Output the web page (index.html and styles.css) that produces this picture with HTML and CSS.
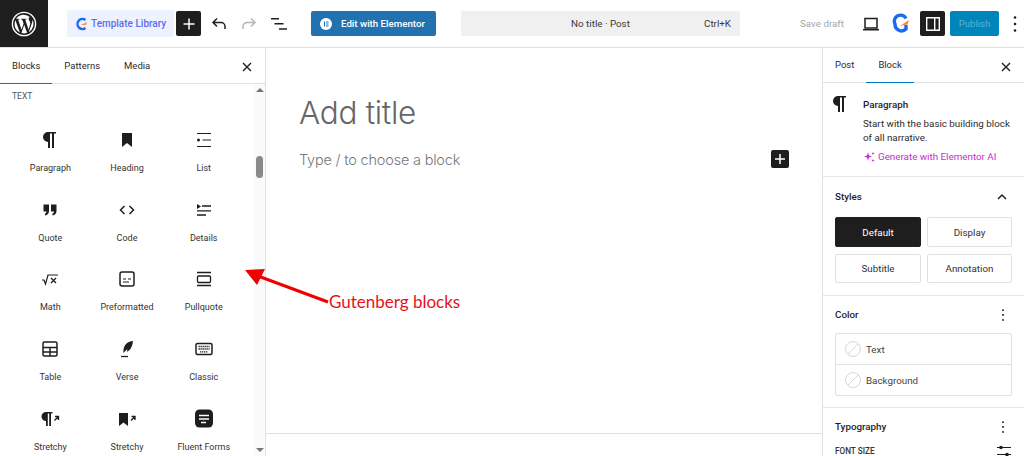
FILE: index.html
```html
<!DOCTYPE html>
<html lang="en">
<head>
    <meta charset="UTF-8">
    <title>Add New Post</title>
    <link rel="stylesheet" href="styles.css">
</head>
<body>
    <svg class="defs" width="0" height="0">
        <symbol id="i-para" viewBox="0 0 24 24"><path d="M18 4H10a5 5 0 0 0 0 10v6h2V5.600h2V20h2V5.600h2z"/></symbol>
        <symbol id="i-close" viewBox="0 0 24 24"><path d="M6 6l12 12M18 6L6 18" fill="none" stroke="currentColor" stroke-width="2"/></symbol>
        <symbol id="i-dots" viewBox="0 0 24 24"><circle cx="12" cy="5.500" r="1.300"/><circle cx="12" cy="12" r="1.300"/><circle cx="12" cy="18.500" r="1.300"/></symbol>
    </svg>

    <header class="topbar">
        <a class="wp-logo">
            <svg width="26" height="26" viewBox="0 0 26 26">
                <circle cx="13" cy="13" r="11.600" fill="none" stroke="#fff" stroke-width="1.400"/>
                <path fill="#fff" d="M3.600 13a9.400 9.400 0 0 0 5.300 8.500L4.400 9.200A9.400 9.400 0 0 0 3.600 13zm15.700-.5c0-1.200-.4-2-.8-2.600-.5-.8-.9-1.400-.9-2.100 0-.8.6-1.500 1.400-1.500h.1A9.400 9.400 0 0 0 5 7.800h.6c1 0 2.500-.1 2.500-.1.500 0 .6.700.1.800 0 0-.5.100-1.100.1l3.400 10.200 2.100-6.200-1.500-4c-.5 0-1-.1-1-.1-.5 0-.4-.8.100-.8 0 0 1.600.1 2.500.1 1 0 2.500-.1 2.500-.1.500 0 .6.700.1.800 0 0-.5.100-1.100.1l3.400 10.100.9-3.100c.4-1.200.7-2.100.7-2.900zm-6.100 1.300l-2.800 8.200a9.400 9.400 0 0 0 5.800-.2l-.1-.1zm8.100-5.300l.1 1c0 1-.2 2-.7 3.300l-2.900 8.300A9.400 9.400 0 0 0 21.300 8.500z"/>
            </svg>
        </a>
        <div class="bar-left">
            <button class="tpl-btn">
                <svg width="13" height="14" viewBox="0 0 13 14"><path d="M10.500 3A5 5 0 1 0 10.500 11" fill="none" stroke="#1a6bf0" stroke-width="2.400"/><path d="M6 8l6-3-1 3z" fill="#f58a3c"/></svg>
                Template Library
            </button>
            <button class="sq-btn">
                <svg width="14" height="14" viewBox="0 0 14 14"><path d="M7 1.500v11M1.500 7h11" stroke="#fff" stroke-width="1.500"/></svg>
            </button>
            <svg class="tool" width="24" height="24" viewBox="0 0 24 24"><path d="M18 17v-2.500a4 4 0 0 0-4-4H6.500M10 6.500l-4 4 4 4" fill="none" stroke="#1e1e1e" stroke-width="1.500"/></svg>
            <svg class="tool" width="24" height="24" viewBox="0 0 24 24"><path d="M6 17v-2.500a4 4 0 0 1 4-4h7.500M14 6.500l4 4-4 4" fill="none" stroke="#b5b5b5" stroke-width="1.500"/></svg>
            <svg class="tool" width="24" height="24" viewBox="0 0 24 24"><path d="M4 6.700h8M7.500 11.800h9M12 17h8" fill="none" stroke="#1e1e1e" stroke-width="1.500"/></svg>
            <button class="elementor-btn">
                <span class="e-badge"><svg width="10" height="10" viewBox="0 0 10 10"><path d="M3 2.500h1v5H3zM5 2.500h2.500v1H5zM5 4.500h2.500v1H5zM5 6.500h2.500v1H5z" fill="#2271b1"/></svg></span>
                Edit with Elementor
            </button>
        </div>
        <div class="command">
            <span>No title · Post</span>
            <span class="shortcut">Ctrl+K</span>
        </div>
        <div class="bar-right">
            <span class="save">Save draft</span>
            <svg class="laptop" width="24" height="24" viewBox="0 0 24 24"><path d="M6 6.500h12v9.500H6zM4 17.800h16" fill="none" stroke="#1e1e1e" stroke-width="1.500"/></svg>
            <svg class="g-logo" width="18" height="22" viewBox="0 0 18 22"><path d="M14 5.500A6 6 0 0 0 3 11a6.500 6.500 0 0 0 11 5v-4" fill="none" stroke="#1a6bf0" stroke-width="3.400"/><path d="M8 13l9-6-1.500 4.500z" fill="#f58a3c"/></svg>
            <span class="sq-btn panel-btn">
                <svg width="18" height="18" viewBox="0 0 18 18"><path d="M2.700 2.700h12.600v12.600H2.700zM10.700 2.700v12.600" fill="none" stroke="#fff" stroke-width="1.400"/></svg>
            </span>
            <button class="publish">Publish</button>
            <svg class="dots" width="16" height="24" viewBox="4 0 16 24"><use href="#i-dots" x="0" y="0" width="24" height="24"/></svg>
        </div>
    </header>

    <main class="editor">
        <aside class="inserter">
            <nav class="tabs">
                <span class="tab active">Blocks</span>
                <span class="tab">Patterns</span>
                <span class="tab">Media</span>
                <svg class="close" width="16" height="16" viewBox="0 0 24 24"><use href="#i-close"/></svg>
            </nav>
            <div class="scroll-wrap">
                <div class="block-list">
                    <h4>TEXT</h4>
                    <div class="block-grid">
                        <div class="block"><svg width="24" height="24" viewBox="0 0 24 24"><use href="#i-para"/></svg><span>Paragraph</span></div>
                        <div class="block"><svg width="24" height="24" viewBox="0 0 24 24"><path d="M7 5h10v14l-5-4-5 4z"/></svg><span>Heading</span></div>
                        <div class="block"><svg width="24" height="24" viewBox="0 0 24 24"><path d="M5 5.500h14M10.500 12H19M5 18.500h14" fill="none" stroke="#1e1e1e" stroke-width="1.200"/><circle cx="6.500" cy="12" r="1.500"/></svg><span>List</span></div>
                        <div class="block"><svg width="24" height="24" viewBox="0 0 24 24"><path d="M5.500 6.500h5.500v6.500c0 2.500-1.500 4-4 4.500v-2c1-.3 1.500-1 1.500-2H5.500zM13 6.500h5.500v6.500c0 2.500-1.500 4-4 4.500v-2c1-.3 1.500-1 1.500-2H13z"/></svg><span>Quote</span></div>
                        <div class="block"><svg width="24" height="24" viewBox="0 0 24 24"><path d="M9.500 8l-4 4 4 4M14.500 8l4 4-4 4" fill="none" stroke="#1e1e1e" stroke-width="1.500"/></svg><span>Code</span></div>
                        <div class="block"><svg width="24" height="24" viewBox="0 0 24 24"><path d="M5 6l4 2.500L5 11z"/><path d="M10 8h9M5 12.800h14M5 17h9" fill="none" stroke="#1e1e1e" stroke-width="1.300"/></svg><span>Details</span></div>
                        <div class="block"><svg width="24" height="24" viewBox="0 0 24 24"><path d="M4 13l2 0 1.500 4 2.500-9h10" fill="none" stroke="#1e1e1e" stroke-width="1.200"/><path d="M13 11l5 5M18 11l-5 5" stroke="#1e1e1e" stroke-width="1.300"/></svg><span>Math</span></div>
                        <div class="block"><svg width="24" height="24" viewBox="0 0 24 24"><rect x="5" y="5" width="14" height="14" rx="2" fill="none" stroke="#1e1e1e" stroke-width="1.500"/><path d="M8 12h3M13 12h3M8 15h6" stroke="#1e1e1e" stroke-width="1.200"/></svg><span>Preformatted</span></div>
                        <div class="block"><svg width="24" height="24" viewBox="0 0 24 24"><path d="M5 5.500h14M5 18.500h14" stroke="#1e1e1e" stroke-width="1.300"/><rect x="5.500" y="9" width="13" height="6.500" rx="1" fill="none" stroke="#1e1e1e" stroke-width="1.300"/></svg><span>Pullquote</span></div>
                        <div class="block"><svg width="24" height="24" viewBox="0 0 24 24"><rect x="5" y="5" width="14" height="14" rx="1.500" fill="none" stroke="#1e1e1e" stroke-width="1.500"/><path d="M5 10.500h14M5 15h14M12 10.500V19" stroke="#1e1e1e" stroke-width="1.500"/></svg><span>Table</span></div>
                        <div class="block"><svg width="24" height="24" viewBox="0 0 24 24"><path d="M18 4c-5 .5-9 3-9.500 9-.1 1-.1 2-.1 3l4-4-.5 2.800c3-1 5.500-5 6.100-10.800z"/><path d="M6 19.500h7" stroke="#1e1e1e" stroke-width="1.300"/></svg><span>Verse</span></div>
                        <div class="block"><svg width="24" height="24" viewBox="0 0 24 24"><rect x="4" y="6.500" width="16" height="11" rx="1.500" fill="none" stroke="#1e1e1e" stroke-width="1.500"/><path d="M6.500 9.500h11M6.500 12h11M8 14.800h8" stroke="#1e1e1e" stroke-width="1.300" stroke-dasharray="1.300 .7"/></svg><span>Classic</span></div>
                        <div class="block"><svg width="24" height="24" viewBox="0 0 24 24"><path d="M14.500 5H8a4.500 4.500 0 0 0 0 9v5h1.800V6.600h1.400V19H13V6.600h1.500z"/><path d="M16.500 13.500l4-4M17 9.500h3.500V13" fill="none" stroke="#1e1e1e" stroke-width="1.300"/></svg><span>Stretchy Paragraph</span></div>
                        <div class="block"><svg width="24" height="24" viewBox="0 0 24 24"><path d="M4 6h9v13l-4.500-3.500L4 19z"/><path d="M16 13.500l4-4M16.500 9.500H20V13" fill="none" stroke="#1e1e1e" stroke-width="1.300"/></svg><span>Stretchy Heading</span></div>
                        <div class="block"><svg width="24" height="24" viewBox="0 0 24 24"><rect x="3" y="2.500" width="18" height="18" rx="4.500" fill="#1e1e1e"/><path d="M7 8.500h10M7 12h10M9 15.500h5" stroke="#fff" stroke-width="1.600"/></svg><span>Fluent Forms</span></div>
                    </div>
                </div>
                <div class="scrollbar">
                    <span class="arr up"></span>
                    <span class="thumb"></span>
                    <span class="arr down"></span>
                </div>
            </div>
        </aside>

        <section class="canvas">
            <div class="canvas-body">
                <h1>Add title</h1>
                <div class="para-row">
                    <span class="placeholder">Type / to choose a block</span>
                    <span class="sq-btn add-small">
                        <svg width="12" height="12" viewBox="0 0 12 12"><path d="M6 1v10M1 6h10" stroke="#fff" stroke-width="1.500"/></svg>
                    </span>
                </div>
            </div>
            <div class="canvas-foot"></div>
        </section>

        <aside class="sidebar">
            <nav class="tabs side-tabs">
                <span class="tab">Post</span>
                <span class="tab active">Block</span>
                <svg class="close" width="16" height="16" viewBox="0 0 24 24"><use href="#i-close"/></svg>
            </nav>
            <div class="panel card">
                <svg class="card-icon" width="24" height="24" viewBox="0 0 24 24"><use href="#i-para"/></svg>
                <div class="card-text">
                    <h3>Paragraph</h3>
                    <p>Start with the basic building block of all narrative.</p>
                    <a class="ai-link">
                        <svg width="12" height="12" viewBox="0 0 12 12"><path d="M5 1.500l1 3 3 1-3 1-1 3-1-3-3-1 3-1zM10 1l.5 1 1 .5-1 .5-.5 1-.5-1-1-.5 1-.5zM10 8l.5 1 1 .5-1 .5-.5 1-.5-1-1-.5 1-.5z" fill="#c72dcf"/></svg>
                        Generate with Elementor AI
                    </a>
                </div>
            </div>
            <div class="panel styles">
                <div class="panel-head">
                    <h3>Styles</h3>
                    <svg width="14" height="14" viewBox="0 0 14 14"><path d="M3 9l4-4 4 4" fill="none" stroke="#1e1e1e" stroke-width="1.500"/></svg>
                </div>
                <div class="style-grid">
                    <span class="style-item active">Default</span>
                    <span class="style-item">Display</span>
                    <span class="style-item">Subtitle</span>
                    <span class="style-item">Annotation</span>
                </div>
            </div>
            <div class="panel color">
                <div class="panel-head">
                    <h3>Color</h3>
                    <svg width="18" height="18" viewBox="0 0 24 24"><use href="#i-dots"/></svg>
                </div>
                <div class="color-list">
                    <div class="color-row"><span class="swatch"></span>Text</div>
                    <div class="color-row"><span class="swatch"></span>Background</div>
                </div>
            </div>
            <div class="panel typo">
                <div class="panel-head">
                    <h3>Typography</h3>
                    <svg width="18" height="18" viewBox="0 0 24 24"><use href="#i-dots"/></svg>
                </div>
                <div class="panel-head size-row">
                    <span class="size-label">FONT SIZE</span>
                    <svg width="16" height="16" viewBox="0 0 16 16"><path d="M1 4.500h14M1 11.500h14" stroke="#1e1e1e" stroke-width="1.200"/><circle cx="5" cy="4.500" r="1.800"/><circle cx="11" cy="11.500" r="1.800"/></svg>
                </div>
            </div>
        </aside>
    </main>

    <!-- annotation drawn on top of the screenshot -->
    <svg class="arrow" width="100" height="50" viewBox="0 0 100 50"><path d="M84 37L14 11" stroke="#f00000" stroke-width="3"/><path d="M1 5l20-1-8 16z" fill="#f00000"/></svg>
    <span class="note">Gutenberg blocks</span>
</body>
</html>
```

FILE: styles.css
```css
* {
    box-sizing: border-box;
}
html, body {
    margin: 0;
    height: 456px;
    overflow: hidden;
}
body {
    font-family: Roboto, "Open Sans", sans-serif;
    font-size: 9.8px;
    color: #1e1e1e;
    background: #fff;
    position: relative;
}
svg {
    fill: #1e1e1e;
    display: block;
    flex: none;
}
.defs {
    position: absolute;
}
button {
    font: inherit;
    border: none;
    padding: 0;
    white-space: nowrap;
}

/* top bar */
.topbar {
    height: 48px;
    display: flex;
    align-items: center;
    border-bottom: 1px solid #e0e0e0;
}
.wp-logo {
    width: 48px;
    height: 47px;
    background: #1e1e1e;
    display: flex;
    align-items: center;
    justify-content: center;
}
.bar-left {
    display: flex;
    align-items: center;
    margin-left: 19px;
    width: 394px;
}
.tpl-btn {
    width: 107px;
    height: 27px;
    background: #eef2ff;
    color: #5b6cf2;
    border-radius: 2px;
    display: flex;
    align-items: center;
    gap: 3px;
    padding-left: 8px;
    font-size: 10px;
    font-weight: 500;
    margin-right: 2px;
}
.sq-btn {
    background: #1e1e1e;
    border-radius: 2px;
    display: flex;
    align-items: center;
    justify-content: center;
    width: 25px;
    height: 25px;
}
.tool {
    margin-left: 6px;
}
.elementor-btn {
    margin-left: 20px;
    width: 125px;
    height: 25px;
    background: #2271b1;
    color: #fff;
    border-radius: 2px;
    display: flex;
    align-items: center;
    gap: 9px;
    padding-left: 9px;
    font-weight: 500;
    font-size: 9.700px;
}
.e-badge {
    width: 12px;
    height: 12px;
    border-radius: 50%;
    background: #fff;
    display: flex;
    align-items: center;
    justify-content: center;
}
.command {
    width: 279px;
    height: 25px;
    background: #f0f0f0;
    border-radius: 2px;
    display: flex;
    align-items: center;
    justify-content: center;
    position: relative;
    color: #3a3a3a;
}
.shortcut {
    position: absolute;
    right: 9px;
}
.bar-right {
    flex: 1;
    display: flex;
    align-items: center;
    padding-left: 60px;
}
.save {
    color: #a7a7a7;
    width: 49px;
    white-space: nowrap;
}
.laptop {
    margin-left: 10px;
}
.g-logo {
    margin-left: 9px;
}
.panel-btn {
    margin-left: 10px;
}
.publish {
    margin-left: 5px;
    width: 49px;
    height: 25px;
    background: #0085ba;
    color: #5fb0d4;
    border-radius: 2px;
    font-size: 9.500px;
}
.dots {
    margin-left: 8px;
}

/* main columns */
.editor {
    height: 408px;
    display: flex;
}
.inserter {
    width: 266px;
    border-right: 1px solid #e0e0e0;
    display: flex;
    flex-direction: column;
}
.tabs {
    height: 36px;
    flex: none;
    display: flex;
    align-items: center;
    border-bottom: 1px solid #e0e0e0;
    font-size: 9.500px;
    position: relative;
}
.tab {
    height: 36px;
    line-height: 35px;
    padding: 0 12px;
    color: #2c2c2c;
}
.tab.active {
    border-bottom: 1.500px solid #007cba;
}
.close {
    position: absolute;
    right: 10px;
    top: 11px;
}
.scroll-wrap {
    flex: 1;
    min-height: 0;
    display: flex;
}
.block-list {
    flex: 1;
    padding-left: 12px;
    overflow: hidden;
}
h4 {
    margin: 6px 0 26px;
    font-size: 8.500px;
    font-weight: 400;
    line-height: 12px;
    color: #555;
}
.block-grid {
    display: grid;
    grid-template-columns: repeat(3, 76.700px);
    grid-auto-rows: 69.700px;
}
.block {
    display: flex;
    flex-direction: column;
    align-items: center;
    text-align: center;
    line-height: 13px;
    color: #333;
    font-size: 9px;
    padding: 0 11px;
}
.block svg {
    margin-bottom: 10px;
}
.scrollbar {
    width: 11px;
    background: #fafafa;
    position: relative;
}
.thumb {
    position: absolute;
    top: 72px;
    left: 2px;
    width: 7px;
    height: 22px;
    border-radius: 4px;
    background: #8a8a8a;
}
.arr {
    position: absolute;
    left: 1.500px;
    border-left: 4px solid transparent;
    border-right: 4px solid transparent;
}
.arr.up {
    top: 4px;
    border-bottom: 4px solid #777;
}
.arr.down {
    bottom: 4px;
    border-top: 4px solid #777;
}

/* canvas */
.canvas {
    flex: 1;
    display: flex;
    flex-direction: column;
}
.canvas-body {
    flex: 1;
    padding: 47px 33px 0 34px;
}
h1 {
    margin: 0 0 0 -1px;
    font-family: Inter, sans-serif;
    font-weight: 300;
    font-size: 31.500px;
    line-height: 36px;
    color: #666;
    letter-spacing: -.3px;
}
.para-row {
    margin-top: 19px;
    display: flex;
    align-items: flex-start;
    justify-content: space-between;
}
.placeholder {
    font-family: Inter, sans-serif;
    font-weight: 300;
    font-size: 14.500px;
    line-height: 18px;
    margin: 1px 0 0 -1px;
    color: #777;
    letter-spacing: -.2px;
}
.add-small {
    width: 18px;
    height: 18px;
}
.canvas-foot {
    height: 23px;
    border-top: 1px solid #e0e0e0;
}

/* settings sidebar */
.sidebar {
    width: 202px;
    border-left: 1px solid #e0e0e0;
}
.side-tabs {
    height: 35px;
}
.side-tabs .tab {
    height: 35px;
    line-height: 34px;
}
.panel {
    border-bottom: 1px solid #e8e8e8;
    padding: 0 12px;
}
.card {
    height: 94px;
    display: flex;
    padding: 9px 12px 0 5px;
}
.card-text {
    margin-left: 11px;
    padding-top: 6px;
}
h3 {
    margin: 0;
    font-size: 9.800px;
    font-weight: 500;
    line-height: 14px;
}
.card p {
    margin: 5px 0;
    line-height: 14px;
    color: #2c2c2c;
}
.ai-link {
    display: flex;
    align-items: center;
    gap: 3px;
    color: #c72dcf;
    line-height: 14px;
    white-space: nowrap;
}
.panel-head {
    display: flex;
    align-items: center;
    justify-content: space-between;
}
.styles {
    height: 119px;
}
.styles .panel-head {
    height: 40px;
    padding-right: 3px;
}
.style-grid {
    display: grid;
    grid-template-columns: 86px 85px;
    grid-template-rows: 30px 29px;
    column-gap: 6px;
    row-gap: 7px;
}
.style-item {
    border: 1px solid #e0e0e0;
    border-radius: 2px;
    display: flex;
    align-items: center;
    justify-content: center;
    color: #333;
}
.style-item.active {
    background: #1e1e1e;
    color: #fff;
    border-color: #1e1e1e;
}
.color {
    height: 112px;
}
.color .panel-head {
    height: 37px;
    padding-top: 1px;
}
.color-list {
    border: 1px solid #e0e0e0;
    border-radius: 2px;
    width: 177px;
}
.color-row {
    height: 30px;
    display: flex;
    align-items: center;
    gap: 5px;
    padding-left: 9px;
    color: #444;
}
.color-row + .color-row {
    height: 31px;
    border-top: 1px solid #e0e0e0;
}
.swatch {
    width: 16px;
    height: 16px;
    border-radius: 50%;
    border: 1px solid #d8d8d8;
    background: linear-gradient(135deg, transparent 47%, #d8d8d8 47%, #d8d8d8 53%, transparent 53%);
}
.typo .panel-head {
    height: 38px;
}
.typo .size-row {
    height: 16px;
    margin-top: -3px;
}
.size-label {
    font-size: 8.200px;
    font-weight: 500;
    color: #333;
}

/* red annotation */
.arrow {
    position: absolute;
    left: 244px;
    top: 265px;
    fill: none;
}
.note {
    position: absolute;
    left: 329px;
    top: 291px;
    font-family: Lato, sans-serif;
    font-size: 17px;
    line-height: 22px;
    color: #e8101a;
}
```
